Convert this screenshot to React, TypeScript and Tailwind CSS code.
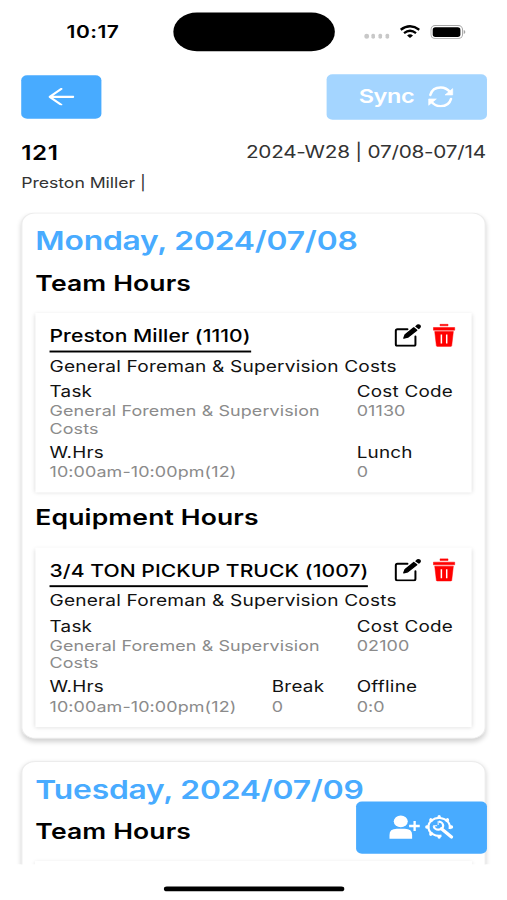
import type { ReactNode } from "react";

interface Field {
  label: string;
  value: string;
}

interface EntryProps {
  name: string;
  description: string;
  costCode: string;
  hours: Field[];
}

function ArrowLeftIcon() {
  return (
    <svg viewBox="0 0 78 54" preserveAspectRatio="none" className="h-[18.6px] w-[22px]" fill="none" stroke="white" strokeWidth="6.5" strokeLinecap="round" strokeLinejoin="round">
      <path d="M4 27H75M39 3L4 27L39 51" />
    </svg>
  );
}

function SyncIcon() {
  return (
    <svg viewBox="0 0 76 66" preserveAspectRatio="none" className="h-[22.8px] w-[21.5px]">
      <path d="M7 27C11 13 23 5 38 5C51 5 60 11 67 20M69 39C65 53 53 61 38 61C25 61 16 55 9 46" fill="none" stroke="white" strokeWidth="7.5" strokeLinecap="round" />
      <path d="M74 8V27H51ZM2 58V39H25Z" fill="white" stroke="white" strokeWidth="2" strokeLinejoin="round" />
    </svg>
  );
}

function EditIcon() {
  return (
    <svg viewBox="0 0 84 72" preserveAspectRatio="none" className="h-[24.8px] w-[23.7px]">
      <path d="M41 17H11Q6 17 6 22V62Q6 67 11 67H60Q65 67 65 62V39" fill="none" stroke="black" strokeWidth="6" strokeLinecap="round" />
      <path d="M30 44L34 34L60 13L69 20L42 41Z" fill="black" stroke="black" strokeWidth="4" strokeLinejoin="round" />
      <path d="M66 7Q72 0 79 4Q85 9 78 15L75 17L64 9Z" fill="black" />
    </svg>
  );
}

function TrashIcon() {
  return (
    <svg viewBox="0 0 68 72" preserveAspectRatio="none" className="h-[24.8px] w-[19.2px]">
      <path d="M22 2H46V7H22ZM2 12H66V20H2ZM6 24H62L57 67Q56 70 53 70H15Q12 70 11 67Z" fill="#ff0000" stroke="#ff0000" strokeWidth="1.5" strokeLinejoin="round" />
      <path d="M26 33V60M42 33V60" stroke="white" strokeWidth="4.5" />
    </svg>
  );
}

function AddUserIcon() {
  return (
    <svg viewBox="0 0 94 72" preserveAspectRatio="none" className="h-[24.8px] w-[26.6px]" fill="white">
      <ellipse cx="35" cy="19" rx="21" ry="18" />
      <path d="M1 71V60Q1 41 23 41H47Q69 41 69 60V71Z" />
      <path d="M60 33H93M76.500 18V48" stroke="white" strokeWidth="7" />
    </svg>
  );
}

function MaintenanceIcon() {
  return (
    <svg viewBox="0 0 88 72" preserveAspectRatio="none" className="h-[24.8px] w-[24.9px]" fill="none" stroke="white">
      <path d="M51 62A32 27 0 1 1 75 42" strokeWidth="6.5" />
      <path d="M44 7V5M67 16L69 14.500M78 36H81M21 16L19 14.500M10 36H7M21 56L19 57.500M44 65V66" strokeWidth="10" strokeLinecap="round" />
      <path d="M51 41L81 66" strokeWidth="10" strokeLinecap="round" />
      <path d="M43 20A14 12 0 1 1 28 33" strokeWidth="7" />
      <path d="M41 18V30M26 32H38" strokeWidth="3" />
    </svg>
  );
}

function StatusBar() {
  return (
    <div className="flex h-[66px] items-center">
      <span className="w-[147px] pl-[56.500px] text-[17.8px] font-semibold tracking-[0.4px]">10:17</span>
      <div className="h-[40.5px] w-[136.5px] rounded-full bg-black" />
      <div className="ml-[25.500px] mt-[9px] flex gap-[2.3px]">
        <i className="h-[4.2px] w-[3.6px] rounded-full bg-[#c8c8c8]" />
        <i className="h-[4.2px] w-[3.6px] rounded-full bg-[#c8c8c8]" />
        <i className="h-[4.2px] w-[3.6px] rounded-full bg-[#c8c8c8]" />
        <i className="h-[4.2px] w-[3.6px] rounded-full bg-[#c8c8c8]" />
      </div>
      <svg viewBox="0 0 62 40" preserveAspectRatio="none" className="ml-[8.500px] h-[13.8px] w-[17.5px]" fill="none" stroke="black" strokeWidth="7">
        <path d="M3 14Q31 -7 59 14M13 24Q31 10 49 24" />
        <path d="M22 31Q31 24 40 31L31 39Z" fill="black" stroke="none" />
      </svg>
      <svg viewBox="0 0 106 42" preserveAspectRatio="none" className="ml-[8.5px] h-[14.5px] w-[30px]">
        <rect x="1.5" y="1.5" width="95" height="39" rx="13" fill="none" stroke="#a5a5a5" strokeWidth="3" />
        <rect x="7" y="6.500" width="83" height="29" rx="8" fill="black" />
        <path d="M100 15Q105 17 105 21Q105 25 100 27Z" fill="#a5a5a5" />
      </svg>
    </div>
  );
}

function LabeledValue({ label, value }: Field) {
  return (
    <div>
      <p className="text-[16px] leading-[22px] tracking-[0.2px] text-[#111]">{label}</p>
      <p className="relative top-[1px] text-[15.2px] leading-[18.6px] tracking-[0.1px] text-[#8b8b8b]">{value}</p>
    </div>
  );
}

function Entry({ name, description, costCode, hours }: EntryProps) {
  return (
    <div className="h-[186px] bg-white px-[12px] pt-[8px] shadow-[0_1px_4px_rgba(0,0,0,0.15)]">
      <div className="flex items-start justify-between">
        <span className="border-b-2 border-black text-[17.9px] font-medium leading-[31px] tracking-[0.05px]">{name}</span>
        <div className="flex gap-[10px] pr-[1.500px] pt-[3px]">
          <EditIcon />
          <TrashIcon />
        </div>
      </div>
      <p className="mt-[2.500px] whitespace-nowrap text-[16.2px] leading-[25px] tracking-[0.15px] text-[#111]">{description}</p>
      <div className="mt-[1.5px] grid grid-cols-[260.500px_1fr]">
        <LabeledValue label="Task" value="General Foremen & Supervision Costs" />
        <LabeledValue label="Cost Code" value={costCode} />
      </div>
      <div className={hours.length === 3 ? "mt-[4.500px] grid grid-cols-[188.500px_72px_1fr]" : "mt-[4.500px] grid grid-cols-[260.500px_1fr]"}>
        {hours.map((h) => (
          <LabeledValue key={h.label} label={h.label} value={h.value} />
        ))}
      </div>
    </div>
  );
}

function SectionTitle({ children }: { children: ReactNode }) {
  return <h3 className="text-[22.5px] font-semibold leading-[30px] tracking-[0.1px]">{children}</h3>;
}

function DayCard({ title, children }: { title: string; children: ReactNode }) {
  return (
    <section className="rounded-[12px] border border-[#ececec] bg-white px-[11px] pb-[11px] pt-[12px] shadow-[0_3px_5px_rgba(0,0,0,0.18)]">
      <h2 className="mb-[11px] text-[27px] font-semibold leading-[34px] tracking-[-0.2px] text-[#48abff]">{title}</h2>
      {children}
    </section>
  );
}

export default function App() {
  return (
    <div className="h-[900px] w-[507px] overflow-hidden bg-white">
      {/* 430x932 phone canvas, stretched to fill the frame */}
      <div className="relative flex h-[932px] w-[430px] origin-top-left scale-x-[1.1791] scale-y-[0.9657] flex-col bg-white font-['Inter',sans-serif] text-black">
        <StatusBar />
        <header className="flex items-center justify-between pl-[18px] pr-[17.5px] pt-[10.5px]">
          <button className="flex h-[45px] w-[68px] items-center justify-center rounded-[5px] bg-[#48abff]">
            <ArrowLeftIcon />
          </button>
          <button className="flex h-[47px] w-[136px] items-center justify-center gap-[12px] rounded-[5px] bg-[#a4d5ff] text-[20px] font-semibold tracking-[-0.4px] text-white">
            Sync
            <SyncIcon />
          </button>
        </header>
        <div className="flex justify-between pl-[18px] pr-[18px] pt-[20px]">
          <div>
            <h1 className="pt-[1px] text-[20.5px] font-semibold leading-[28px] tracking-[0.5px]">121</h1>
            <p className="pt-[6px] text-[15px] leading-[22px] tracking-[-0.05px] text-[#333]">Preston Miller |</p>
          </div>
          <span className="text-[17.6px] leading-[28px] tracking-[-0.22px] text-[#333]">2024-W28 | 07/08-07/14</span>
        </div>
        <main className="mt-[19px] h-[675.5px] overflow-hidden px-[18px]">
          <div className="flex flex-col gap-[23px]">
            <DayCard title="Monday, 2024/07/08">
              <SectionTitle>Team Hours</SectionTitle>
              <div className="mb-[11px] mt-[16px]">
                <Entry
                  name="Preston Miller (1110)"
                  description="General Foreman & Supervision Costs"
                  costCode="01130"
                  hours={[
                    { label: "W.Hrs", value: "10:00am-10:00pm(12)" },
                    { label: "Lunch", value: "0" },
                  ]}
                />
              </div>
              <SectionTitle>Equipment Hours</SectionTitle>
              <div className="mt-[16px]">
                <Entry
                  name="3/4 TON PICKUP TRUCK (1007)"
                  description="General Foreman & Supervision Costs"
                  costCode="02100"
                  hours={[
                    { label: "W.Hrs", value: "10:00am-10:00pm(12)" },
                    { label: "Break", value: "0" },
                    { label: "Offline", value: "0:0" },
                  ]}
                />
              </div>
            </DayCard>
            <DayCard title="Tuesday, 2024/07/09">
              <SectionTitle>Team Hours</SectionTitle>
              <div className="mt-[16px] h-[60px] shadow-[0_1px_4px_rgba(0,0,0,0.15)]" />
            </DayCard>
          </div>
        </main>
        <button className="absolute left-[302px] top-[829.5px] flex h-[54px] w-[111px] items-center justify-center gap-[4px] rounded-[5px] bg-[#48abff]">
          <AddUserIcon />
          <MaintenanceIcon />
        </button>
        <div className="mx-auto mt-[23px] h-[5.4px] w-[153px] rounded-full bg-black" />
      </div>
    </div>
  );
}
